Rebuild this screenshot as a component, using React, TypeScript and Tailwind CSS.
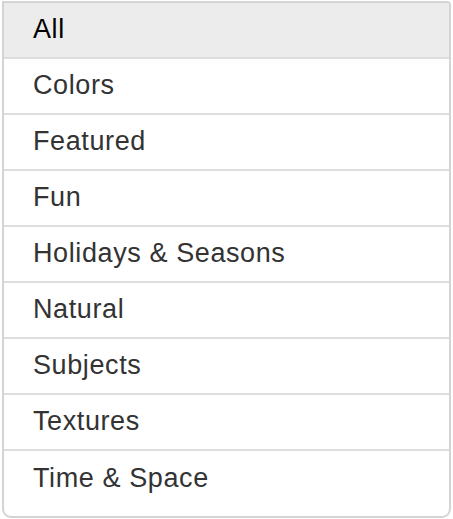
const items = [
  "All",
  "Colors",
  "Featured",
  "Fun",
  "Holidays & Seasons",
  "Natural",
  "Subjects",
  "Textures",
  "Time & Space",
];

export default function App() {
  return (
    <div className="h-[519px] w-[453px] bg-white pl-[2px] pt-[1px] font-['Liberation_Sans',Arial,sans-serif]">
      <ul className="w-[449px] overflow-hidden rounded-br-[9px] rounded-bl-[9px] rounded-tr-[4px] border-2 border-[#d4d4d4] pb-[9px]">
        {items.map((name, i) => (
          <li
            key={name}
            className={`flex h-[56px] items-center pb-[2px] pl-[29px] text-[27px] tracking-[0.6px] ${
              i === 0 ? "h-[54px] bg-[#ececec] text-black" : "text-[#333]"
            } ${i < items.length - 1 ? "border-b-2 border-[#dedede]" : ""}`}
          >
            {name}
          </li>
        ))}
      </ul>
    </div>
  );
}
